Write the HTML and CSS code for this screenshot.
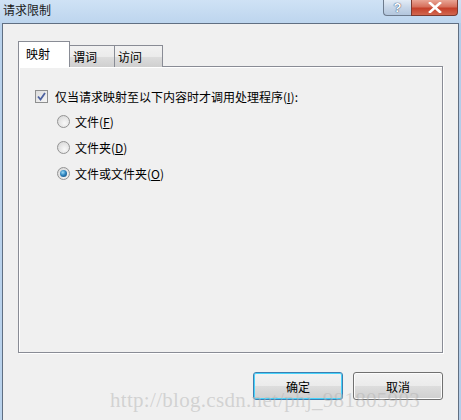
FILE: index.html
```html
<!DOCTYPE html>
<html>
<head>
  <meta charset="utf-8">
  <title>请求限制</title>
  <link rel="stylesheet" href="styles.css">
</head>
<body>
  <div class="window">
    <div class="titlebar">
      <span class="title">请求限制</span>
      <div class="caption-btns">
        <span class="cap help">?</span>
        <span class="cap close">
          <svg width="16" height="11" viewBox="0 0 16 11">
            <path d="M3 1 L13 10 M13 1 L3 10" stroke="#fff" stroke-width="2.6" stroke-linecap="square"/>
          </svg>
        </span>
      </div>
    </div>

    <div class="client">
      <div class="tabs">
        <span class="tab active">映射</span>
        <span class="tab">谓词</span>
        <span class="tab wide">访问</span>
      </div>

      <div class="panel">
        <label class="check-row">
          <span class="checkbox">
            <svg width="9" height="9" viewBox="0 0 9 9">
              <path d="M1 4.5 L3.5 7.5 L8 1" fill="none" stroke="#4d62a0" stroke-width="1.8"/>
            </svg>
          </span>
          <span>仅当请求映射至以下内容时才调用处理程序(<u>I</u>):</span>
        </label>

        <div class="radios">
          <label class="radio-row"><span class="radio"></span><span>文件(<u>F</u>)</span></label>
          <label class="radio-row"><span class="radio"></span><span>文件夹(<u>D</u>)</span></label>
          <label class="radio-row"><span class="radio on"></span><span>文件或文件夹(<u>O</u>)</span></label>
        </div>
      </div>

      <div class="buttons">
        <button class="btn default">确定</button>
        <button class="btn">取消</button>
      </div>
    </div>

    <div class="watermark">http://blog.csdn.net/phj_981805903</div>
  </div>
</body>
</html>
```

FILE: styles.css
```css
body {
  margin: 0;
  font-family: "Noto Sans CJK SC", "Liberation Sans", sans-serif;
  font-size: 12px;
  color: #000;
}

.window {
  position: relative;
  width: 461px;
  height: 420px;
  background: linear-gradient(90deg, #b9d2ec 0%, #c4dbf2 40%, #b3cde9 100%);
  overflow: hidden;
}

.titlebar {
  height: 23px;
  display: flex;
  justify-content: space-between;
  align-items: flex-start;
  background: linear-gradient(180deg, #cfe2f5 0%, #bdd5ee 100%);
}

.title {
  margin: 2px 0 0 3px;
  line-height: 16px;
  color: #1a1a1a;
}

.caption-btns {
  display: flex;
  margin-right: 3px;
}

.cap {
  height: 15px;
  display: flex;
  align-items: center;
  justify-content: center;
  border: 1px solid #6d7b8d;
  border-top: none;
}

.help {
  width: 27px;
  border-right: none;
  border-radius: 0 0 0 4px;
  background: linear-gradient(180deg, #e3ecf6 0%, #c7d6e8 50%, #b3c6dd 100%);
  color: #fff;
  font-family: "Liberation Sans", sans-serif;
  font-weight: bold;
  font-size: 13px;
  text-shadow: 0 0 1px #34496a, 0 0 1px #34496a;
}

.close {
  width: 45px;
  border-radius: 0 0 4px 0;
  border-color: #7b3a30;
  background: linear-gradient(180deg, #e9a595 0%, #d6705c 45%, #c5402a 55%, #d2674f 100%);
}

.client {
  margin: 0 2px;
  height: 392px;
  background: #f0f0f0;
  border: 1px solid #606f82;
  padding: 18px 15px 0 15px;
}

.tabs {
  display: flex;
  align-items: flex-end;
  height: 25px;
  position: relative;
  z-index: 1;
}

.tab {
  height: 21px;
  width: 41px;
  line-height: 21px;
  padding-left: 3px;
  border: 1px solid #898c95;
  border-bottom: none;
  border-left: none;
  background: linear-gradient(180deg, #f2f2f2 0%, #ebebeb 50%, #dddddd 51%, #cfcfcf 100%);
}

.tab.wide {
  width: 44px;
}

.tab.active {
  height: 25px;
  width: 43px;
  padding-left: 7px;
  line-height: 24px;
  border-left: 1px solid #898c95;
  background: #fff;
}

.panel {
  height: 285px;
  margin-top: -1px;
  width: 423px;
  border: 1px solid #898c95;
  background: #f0f0f0;
  box-shadow: inset 1px 1px 0 #fff, 1px 1px 0 #fff;
}

.check-row {
  display: flex;
  align-items: center;
  height: 14px;
  margin: 22px 0 0 16px;
  gap: 7px;
}

.checkbox {
  width: 11px;
  height: 11px;
  border: 1px solid #8e8f8f;
  background: linear-gradient(135deg, #dcdcdc 0%, #f6f6f6 100%);
  display: flex;
  align-items: center;
  justify-content: center;
}

.radios {
  display: flex;
  flex-direction: column;
  gap: 12px;
  margin: 11px 0 0 38px;
}

.radio-row {
  display: flex;
  align-items: center;
  height: 14px;
  gap: 5px;
}

.radio {
  width: 11px;
  height: 11px;
  border-radius: 50%;
  border: 1px solid #939393;
  background: radial-gradient(circle at 60% 65%, #f8f8f8 0%, #e2e2e2 60%, #cfcfcf 100%);
  position: relative;
}

.radio.on::after {
  content: "";
  position: absolute;
  left: 2px;
  top: 2px;
  width: 7px;
  height: 7px;
  border-radius: 50%;
  background: radial-gradient(circle at 40% 35%, #9fdcf7 0%, #2f86c0 45%, #0d3f6e 100%);
}

.buttons {
  display: flex;
  justify-content: flex-end;
  gap: 10px;
  margin-top: 19px;
}

.btn {
  width: 90px;
  height: 28px;
  font-family: inherit;
  font-size: 12px;
  border: 1px solid #707070;
  border-radius: 3px;
  background: linear-gradient(180deg, #f2f2f2 0%, #ebebeb 50%, #dddddd 51%, #cfcfcf 100%);
  box-shadow: inset 0 0 0 1px #fcfcfc;
  padding: 0;
}

.btn.default {
  border-color: #3c7fb1;
  box-shadow: inset 0 0 0 1px #48d3fb;
}

.watermark {
  position: absolute;
  left: 110px;
  top: 388px;
  font-family: "Liberation Serif", serif;
  font-size: 21px;
  color: rgba(180, 180, 180, 0.5);
  letter-spacing: 0.3px;
  pointer-events: none;
}
```
